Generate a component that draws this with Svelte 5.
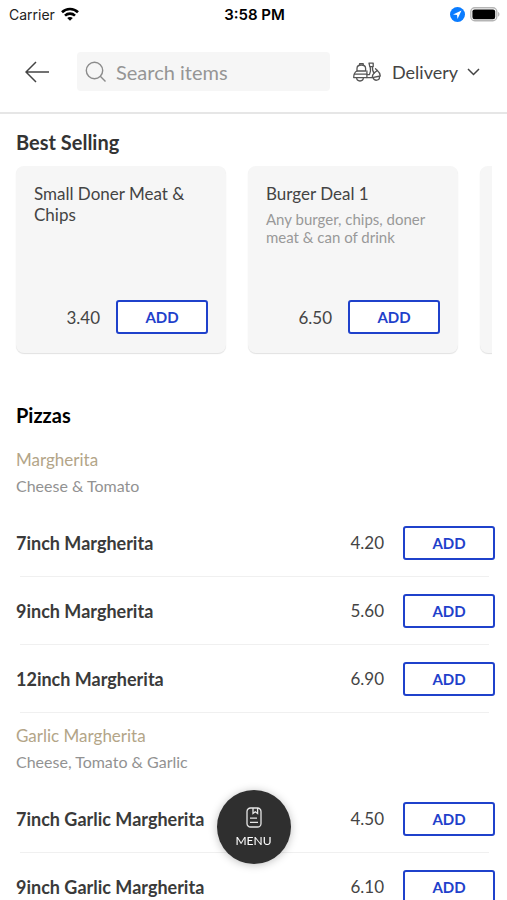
<script lang="ts">
  type Deal = { name: string; description?: string; price: string };

  let search = "";
  let mode = "Delivery";

  const deals: Deal[] = [
    { name: "Small Doner Meat & Chips", price: "3.40" },
    { name: "Burger Deal 1", description: "Any burger, chips, doner meat & can of drink", price: "6.50" },
    { name: "", price: "" },
  ];

  const groups = [
    {
      name: "Margherita",
      description: "Cheese & Tomato",
      items: [
        { name: "7inch Margherita", price: "4.20" },
        { name: "9inch Margherita", price: "5.60" },
        { name: "12inch Margherita", price: "6.90" },
      ],
    },
    {
      name: "Garlic Margherita",
      description: "Cheese, Tomato & Garlic",
      items: [
        { name: "7inch Garlic Margherita", price: "4.50" },
        { name: "9inch Garlic Margherita", price: "6.10" },
      ],
    },
  ];
</script>

<div class="app">
  <div class="status">
    <div class="carrier">
      <span>Carrier</span>
      <svg width="18" height="14" viewBox="0 0 18 14" fill="none" stroke="#000" stroke-width="2.6" aria-hidden="true">
        <path d="M1 5.2C5.4 .9 12.6 .9 17 5.2" />
        <path d="M4 8.6c2.8-2.7 7.2-2.7 10 0" />
        <path d="M9 13.8 6.2 11c1.6-1.4 4-1.4 5.6 0z" fill="#000" stroke="none" />
      </svg>
    </div>
    <div class="time">3:58 PM</div>
    <div class="indicators">
      <svg width="15" height="15" viewBox="0 0 15 15" aria-hidden="true">
        <circle cx="7.5" cy="7.5" r="7.5" fill="#0a7cff" />
        <path d="M11.5 3.6 3 7.5l4 .5.5 4z" fill="#fff" />
      </svg>
      <svg width="30" height="15" viewBox="0 0 30 15" aria-hidden="true">
        <rect x=".8" y=".8" width="26" height="13" rx="4" fill="#fff" stroke="#b5b5b5" stroke-width="1.4" />
        <rect x="2.4" y="2.4" width="22.8" height="9.8" rx="2.2" fill="#000" />
        <path d="M28.2 5c1.6.6 1.6 4 0 4.6z" fill="#aaa" />
      </svg>
    </div>
  </div>

  <header>
    <button type="button" class="back" aria-label="Back">
      <svg width="24" height="22" viewBox="0 0 24 22" fill="none" stroke="#444" stroke-width="1.5">
        <path d="M11 1 1 11l10 10M1 11h23" />
      </svg>
    </button>

    <label class="search">
      <svg width="22" height="22" viewBox="0 0 22 22" fill="none" stroke="#8c8c8c" stroke-width="1.4" aria-hidden="true">
        <circle cx="9.5" cy="9.5" r="8.2" />
        <path d="m15.3 15.3 5.2 5.2" />
      </svg>
      <input type="text" placeholder="Search items" aria-label="Search items" bind:value={search} />
    </label>

    <div class="mode">
      <svg width="28" height="20" viewBox="0 0 28 20" fill="none" stroke="#555" stroke-width="1.3" stroke-linejoin="round" stroke-linecap="round" aria-hidden="true">
        <path d="M4 9V6.4C4 4.2 5.8 3 8.3 3s4.3 1.2 4.3 3.4V9z" />
        <path d="M6.6 3V1.6h3.6V3" />
        <path d="M4 9c-2.2 1-3.3 3-3.3 6.6h13.2V9" />
        <path d="M1.4 12.2h12.5" />
        <path d="M3.6 15.6a3.4 3.4 0 0 0 6.8 0" />
        <path d="M13.9 15.6h5.4c0-2 .6-3.4 1.8-4.6-1.6-1.6-1.8-4-1.6-6.4" />
        <path d="M13.9 12.6h2.6c1.2-2.6 1.2-5.6.7-8" />
        <path d="M16 1.2h4.2v3.4h-3.4z" />
        <path d="M21.1 11l3.2-2.6c2 1.6 3 3.4 3 5.6l-8 1.6" />
        <path d="M24.3 8.4l-1.8-1.6" />
        <path d="M20.2 15.6a3.1 3.1 0 0 0 6.2-1" />
      </svg>
      <select bind:value={mode} aria-label="Order type">
        <option>Delivery</option>
        <option>Collection</option>
      </select>
      <svg class="chevron" width="13" height="8" viewBox="0 0 13 8" fill="none" stroke="#444" stroke-width="1.5" aria-hidden="true">
        <path d="m1 1 5.5 5.5L12 1" />
      </svg>
    </div>
  </header>

  <main>
    <section>
      <h2 class="best">Best Selling</h2>
      <div class="deals">
        {#each deals as deal}
          <article class="card">
            {#if deal.name}
              <h3>{deal.name}</h3>
              {#if deal.description}
                <p>{deal.description}</p>
              {/if}
              <div class="buy">
                <span class="price">{deal.price}</span>
                <button type="button" class="add" aria-label={`Add ${deal.name}`}>ADD</button>
              </div>
            {/if}
          </article>
        {/each}
      </div>
    </section>

    <section>
      <h2 class="category">Pizzas</h2>
      {#each groups as group}
        <div class="group">
          <h3>{group.name}</h3>
          <p>{group.description}</p>
        </div>
        <ul>
          {#each group.items as item}
            <li>
              <div class="row">
                <span class="name">{item.name}</span>
                <span class="price">{item.price}</span>
                <button type="button" class="add" aria-label={`Add ${item.name}`}>ADD</button>
              </div>
              <hr />
            </li>
          {/each}
        </ul>
      {/each}
    </section>
  </main>

  <button type="button" class="menu">
    <svg width="16" height="21" viewBox="0 0 16 21" fill="none" stroke="#e6e6e6" stroke-width="1.3" aria-hidden="true">
      <rect x="1" y="1" width="14" height="19" rx="3.6" />
      <path d="M7 1v5.4l2.3-1.7 2.3 1.7V1M4 11.2h7M4 15.4h8" />
    </svg>
    <span>MENU</span>
  </button>
</div>

<style>
  :global(body) {
    margin: 0;
    background: #fff;
  }

  .app {
    display: flex;
    flex-direction: column;
    height: 100vh;
    overflow: hidden;
    background: #fff;
    color: #444;
    font-family: Lato, "Open Sans", sans-serif;
  }

  h2, h3, p, ul {
    margin: 0;
    padding: 0;
  }

  button, input, select {
    font-family: inherit;
    color: inherit;
  }

  svg {
    display: block;
    flex: none;
  }

  .status {
    display: grid;
    grid-template-columns: 1fr auto 1fr;
    align-items: center;
    flex: none;
    height: 28px;
    padding: 0 7px 0 9px;
    font-family: Inter, sans-serif;
    font-size: 14px;
    color: #222;
  }

  .carrier {
    display: flex;
    align-items: center;
    gap: 6px;
  }

  .time {
    font-size: 15px;
    font-weight: 600;
    color: #000;
  }

  .indicators {
    display: flex;
    align-items: center;
    justify-content: flex-end;
    gap: 5px;
  }

  header {
    display: flex;
    align-items: center;
    flex: none;
    padding: 24px 27px 21px 25px;
    border-bottom: 2px solid #e6e6e6;
  }

  .back {
    padding: 0;
    border: 0;
    background: none;
    cursor: pointer;
  }

  .search {
    display: flex;
    align-items: center;
    flex: 1;
    gap: 9px;
    min-width: 0;
    height: 39px;
    margin: 0 23px 0 28px;
    padding: 0 8px;
    border-radius: 4px;
    background: #f6f6f6;
    box-sizing: border-box;
  }

  .search input {
    flex: 1;
    min-width: 0;
    padding: 0;
    border: 0;
    outline: 0;
    background: none;
    font-size: 20px;
  }

  .search input::placeholder {
    color: #959595;
    opacity: 1;
  }

  .mode {
    display: flex;
    align-items: center;
    flex: none;
  }

  .mode select {
    width: 93px;
    margin: 0 -18px 0 11px;
    padding: 0;
    border: 0;
    outline: 0;
    appearance: none;
    background: none;
    font-size: 18px;
    line-height: 24px;
    cursor: pointer;
  }

  .chevron {
    pointer-events: none;
  }

  main {
    flex: 1;
    min-height: 0;
    overflow: hidden;
  }

  h2 {
    font-size: 20px;
    line-height: 24px;
    font-weight: 700;
  }

  .best {
    padding: 16px 16px 12px;
    color: #333;
  }

  .deals {
    display: flex;
    gap: 22px;
    margin: 0 15px 0 14px;
    padding: 0 0 4px 2px;
    overflow: hidden;
  }

  .card {
    display: flex;
    flex-direction: column;
    flex: none;
    box-sizing: border-box;
    width: 210px;
    height: 187px;
    padding: 17px 18px 19px;
    border-radius: 8px;
    background: #f6f6f6;
    box-shadow: 0 1px 1px rgba(0, 0, 0, 0.12);
  }

  .card h3 {
    font-size: 17px;
    line-height: 21px;
    font-weight: 400;
  }

  .card p {
    margin-top: 6px;
    font-size: 15px;
    line-height: 18px;
    color: #999;
  }

  .buy {
    display: flex;
    align-items: center;
    justify-content: flex-end;
    gap: 16px;
    margin-top: auto;
  }

  .price {
    font-size: 17px;
  }

  .add {
    box-sizing: border-box;
    width: 92px;
    height: 34px;
    padding: 0;
    border: 2px solid #1f41cb;
    border-radius: 3px;
    background: #fff;
    color: #1f41cb;
    font-size: 15px;
    font-weight: 700;
    cursor: pointer;
  }

  .category {
    padding: 46px 16px 10px;
    color: #000;
  }

  .group {
    padding: 12px 16px;
  }

  .group h3 {
    font-size: 17px;
    line-height: 22px;
    font-weight: 400;
    color: #b3a588;
  }

  .group p {
    margin-top: 4px;
    font-size: 16px;
    line-height: 22px;
    color: #929292;
  }

  ul {
    list-style: none;
  }

  .row {
    display: flex;
    align-items: center;
    height: 67px;
    padding: 0 12px 0 16px;
  }

  .name {
    flex: 1;
    font-size: 18px;
    font-weight: 700;
    color: #3a3a3a;
  }

  .row .price {
    margin-right: 19px;
  }

  hr {
    height: 1px;
    margin: 0 18px 0 20px;
    border: 0;
    background: #f0f0f0;
  }

  .menu {
    position: fixed;
    bottom: 36px;
    left: 50%;
    transform: translateX(-50%);
    display: flex;
    flex-direction: column;
    align-items: center;
    justify-content: center;
    gap: 6px;
    width: 74px;
    height: 74px;
    padding: 0;
    border: 0;
    border-radius: 50%;
    background: #2f2f2f;
    box-shadow: 0 1px 8px rgba(0, 0, 0, 0.25);
    color: #fff;
    font-size: 12px;
    line-height: 14px;
    cursor: pointer;
  }
</style>
